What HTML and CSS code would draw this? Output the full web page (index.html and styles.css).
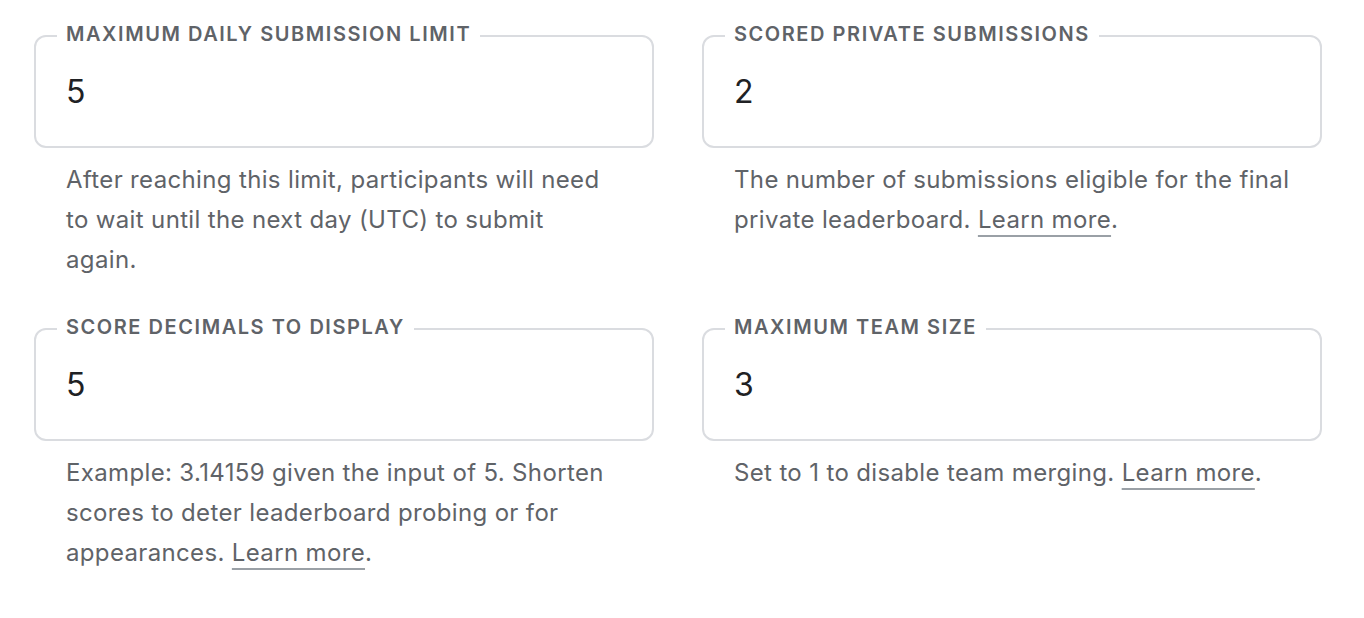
FILE: index.html
```html
<!DOCTYPE html>
<html lang="en">
<head>
    <meta charset="UTF-8">
    <meta name="viewport" content="width=device-width, initial-scale=1.0">
    <title>Submission settings</title>
    <link rel="stylesheet" href="styles.css">
</head>
<body>
    <div class="settings-grid">
        <div class="setting">
            <fieldset class="field-frame">
                <legend>Maximum daily submission limit</legend>
                <input type="text" class="field-input" value="5">
            </fieldset>
            <p class="helper">After reaching this limit, participants will need to wait until the next day (UTC) to submit<br>again.</p>
        </div>

        <div class="setting">
            <fieldset class="field-frame">
                <legend>Scored private submissions</legend>
                <input type="text" class="field-input" value="2">
            </fieldset>
            <p class="helper">The number of submissions eligible for the final private leaderboard. <a href="#">Learn more</a>.</p>
        </div>

        <div class="setting">
            <fieldset class="field-frame">
                <legend>Score decimals to display</legend>
                <input type="text" class="field-input" value="5">
            </fieldset>
            <p class="helper">Example: 3.14159 given the input of 5. Shorten scores to deter leaderboard probing or for appearances. <a href="#">Learn more</a>.</p>
        </div>

        <div class="setting">
            <fieldset class="field-frame">
                <legend>Maximum team size</legend>
                <input type="text" class="field-input" value="3">
            </fieldset>
            <p class="helper">Set to 1 to disable team merging. <a href="#">Learn more</a>.</p>
        </div>
    </div>
</body>
</html>
```

FILE: styles.css
```css
body {
    font-family: Inter, "Noto Sans", Arial, sans-serif;
    background-color: white;
    color: #5f6368;
    margin: 0;
}
.settings-grid {
    display: grid;
    grid-template-columns: 620px 620px;
    column-gap: 48px;
    row-gap: 35px;
    padding: 22px 0 0 34px;
}
.field-frame {
    margin: 0;
    padding: 0 21px;
    border: 2px solid #dadce0;
    border-radius: 12px;
    height: 126px;
    box-sizing: border-box;
}
.field-frame legend {
    padding: 0 9px 3px;
    font-size: 20px;
    line-height: 24px;
    font-weight: 600;
    letter-spacing: 1.55px;
    text-transform: uppercase;
    color: #5f6368;
}
.field-input {
    display: block;
    width: 100%;
    box-sizing: border-box;
    margin: 14px 0 0;
    padding: 10px 9px;
    border: none;
    outline: none;
    background: transparent;
    font-family: inherit;
    font-size: 32px;
    line-height: 38px;
    color: #202124;
}
.helper {
    margin: 12px 0 0;
    padding: 0 30px 0 32px;
    font-size: 24px;
    line-height: 40px;
    letter-spacing: 0.35px;
}
.helper a {
    color: inherit;
    text-decoration: underline;
    text-decoration-color: #9aa0a6;
    text-decoration-thickness: 2px;
    text-underline-offset: 7px;
}
```
